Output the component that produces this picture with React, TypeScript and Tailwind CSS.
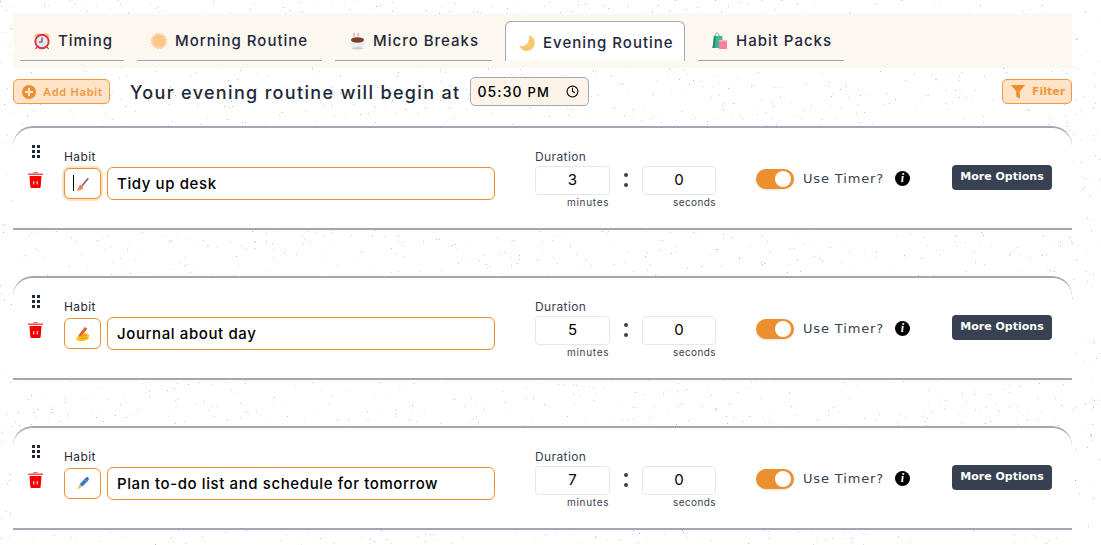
import { useMemo } from "react";
import { Clock } from "lucide-react";

const FONT = "font-['Inter',sans-serif]";
const VERDANA = "font-['DejaVu_Sans',sans-serif]";

// Seeded noise so the paper speckle is the same on every render
function Speckle() {
    const dots = useMemo(() => {
        let seed = 42;
        const rand = () => {
            seed = (seed * 16807) % 2147483647;
            return seed / 2147483647;
        };
        const out: { x: number; y: number; o: number }[] = [];
        for (let i = 0; i < 3600; i++) {
            out.push({
                x: Math.floor(rand() * 1101),
                y: Math.floor(rand() * 545),
                o: 0.15 + rand() * 0.5,
            });
        }
        return out;
    }, []);
    return (
        <svg className="absolute inset-0" width={1101} height={545}>
            {dots.map((d, i) => (
                <rect key={i} x={d.x} y={d.y} width={1} height={1} fill="#8a8a8a" opacity={d.o} />
            ))}
        </svg>
    );
}

function AlarmIcon() {
    return (
        <svg width="18" height="18" viewBox="0 0 18 18">
            <path d="M1 5.500 Q1.500 1 6.500 1.500 Z M17 5.500 Q16.500 1 11.500 1.500 Z" fill="#f7c24b" />
            <path d="M4 15l-1.500 2M14 15l1.500 2" stroke="#9a3a46" strokeWidth="1.200" />
            <circle cx="9" cy="9.500" r="6.700" fill="#e6e7ea" stroke="#dd2e44" strokeWidth="1.900" />
            <path d="M9 5.500v4.200l-3 .6" fill="none" stroke="#444" strokeWidth="1.100" />
        </svg>
    );
}

function SunIcon() {
    return (
        <svg width="18" height="18" viewBox="0 0 18 18">
            <circle cx="9" cy="9" r="6.800" fill="#fdc78a" />
            <circle cx="9" cy="9" r="7.400" fill="none" stroke="#fdc78a" strokeWidth="1.600" strokeDasharray="1.600 1.300" />
        </svg>
    );
}

function CoffeeIcon() {
    return (
        <svg width="20" height="18" viewBox="0 0 20 18">
            <path d="M6 5c-1-1.500 1-2 0-4M10 5c-1-1.500 1-2 0-4" fill="none" stroke="#d9a58c" strokeWidth="1.200" />
            <path d="M1.500 8h16c0 4-2 7-4.500 7.500h-7C3.500 15 1.500 12 1.500 8z" fill="#e8edf0" />
            <ellipse cx="9.500" cy="8" rx="8" ry="3.500" fill="#f4f6f7" />
            <ellipse cx="9.500" cy="8" rx="6.500" ry="2.700" fill="#7b3f2a" />
            <ellipse cx="9.500" cy="16.300" rx="6" ry="1.200" fill="#c6d2da" />
        </svg>
    );
}

function MoonIcon() {
    return (
        <svg width="18" height="18" viewBox="0 0 18 18">
            <path d="M11 1.200A8 8 0 1 1 1.200 11.500C5 14 12.500 10.500 11 1.200z" fill="#fcc66f" />
        </svg>
    );
}

function BagsIcon() {
    return (
        <svg width="18" height="18" viewBox="0 0 18 18">
            <path d="M4 4c0-4 4-4 4 0" fill="none" stroke="#7fa99b" strokeWidth="1" />
            <path d="M3 4h8l2 12H1.500z" fill="#3fb79a" />
            <path d="M3 4h2L4 16H1.500z" fill="#2a8e78" />
            <rect x="8" y="8" width="8" height="9" fill="#f47fa0" />
            <rect x="8" y="8" width="8" height="1.500" fill="#f9b2c6" />
        </svg>
    );
}

function BroomIcon() {
    return (
        <svg width="15" height="16" viewBox="0 0 18 18" className="mt-[2px]">
            <path d="M16 1L8 10.500" stroke="#8a5a5a" strokeWidth="1.800" />
            <path d="M6 8.500l4 3.500c-1 2.500-4.500 4-8 4 1.500-1.500 2-5 4-7.500z" fill="#f4845f" />
        </svg>
    );
}

function HandIcon() {
    return (
        <svg width="16" height="16" viewBox="0 0 18 18">
            <path d="M1 15l4-6 5-2 6 3-1 5-5 2H4z" fill="#fcc21b" />
            <path d="M11 1l3 2-7 8-3 1 1-3z" fill="#e8593c" />
            <path d="M6 12l7-2M6 14.500l7-1.500" stroke="#e8762c" strokeWidth="0.900" />
        </svg>
    );
}

function PenIcon() {
    return (
        <svg width="15" height="15" viewBox="0 0 18 18">
            <path d="M15.500 1.500c1.500 1 1.500 2.500 0 4.500l-7 7-3-3 7-7.500c1-1 2-1.500 3-1z" fill="#3b78c4" />
            <path d="M5.500 10l3 3-6 3.500z" fill="#f2c14e" />
            <path d="M12 5l1.500 1.500" stroke="#9cc3ef" strokeWidth="1" />
        </svg>
    );
}

function TrashIcon() {
    return (
        <svg width="15" height="16" viewBox="0 0 15 16">
            <path d="M5.500 1.500V.6h4v.9" fill="none" stroke="#ff5a5a" strokeWidth="1" />
            <rect x="0" y="1.500" width="15" height="1.600" rx=".5" fill="#ff4d4d" />
            <path d="M1.500 4h12l-.8 10.500a1.500 1.500 0 0 1-1.500 1.500H3.800a1.500 1.500 0 0 1-1.500-1.500z" fill="#f50000" />
            <path d="M5.800 9v3.500M9.200 9v3.500" stroke="#fff" strokeWidth="1" />
        </svg>
    );
}

function PlusDisc() {
    return (
        <svg width="14" height="14" viewBox="0 0 14 14">
            <circle cx="7" cy="7" r="7" fill="#ec8f2f" />
            <path d="M7 3v8M3 7h8" stroke="#fee3c6" strokeWidth="2" />
        </svg>
    );
}

function FunnelIcon() {
    return (
        <svg width="14" height="14" viewBox="0 0 14 14">
            <path d="M0 0h14L8.800 6.500V14l-3.600-2.500V6.500z" fill="#ec8f2f" />
        </svg>
    );
}

const tabs = [
    { label: "Timing", icon: <AlarmIcon />, width: "w-[104px]" },
    { label: "Morning Routine", icon: <SunIcon />, width: "w-[185px]" },
    { label: "Micro Breaks", icon: <CoffeeIcon />, width: "w-[157px]", gap: "gap-[5px]" },
    { label: "Evening Routine", icon: <MoonIcon />, width: "w-[180px]", active: true },
    { label: "Habit Packs", icon: <BagsIcon />, width: "w-[146px]" },
];

const habits = [
    { name: "Tidy up desk", minutes: 3, icon: <BroomIcon />, focused: true },
    { name: "Journal about day", minutes: 5, icon: <HandIcon /> },
    { name: "Plan to-do list and schedule for tomorrow", minutes: 7, icon: <PenIcon /> },
];

function DragDots() {
    return (
        <div className="grid grid-cols-2 gap-x-[2px] gap-y-[2px] w-[8px]">
            {[0, 1, 2, 3, 4, 5].map((i) => (
                <span key={i} className="w-[3px] h-[3px] bg-[#1f2937]" />
            ))}
        </div>
    );
}

function HabitCard({ name, minutes, icon, focused }: { name: string; minutes: number; icon: React.ReactNode; focused?: boolean }) {
    return (
        <div className="relative flex h-[104px] mb-[46px] bg-white border-t-2 border-b-2 border-[#a3a6b5] rounded-t-[20px]">
            {/* Handle and delete */}
            <div className="w-[51px] pr-[6px] pt-[17px] flex flex-col items-center">
                <DragDots />
                <div className="mt-[14px]">
                    <TrashIcon />
                </div>
            </div>

            {/* Habit name */}
            <div className="w-[471px] pt-[22px]">
                <div className="text-[12px] leading-[14px] tracking-[0.4px] text-[#1f2937]">Habit</div>
                <div className="flex gap-[6px] mt-[3px]">
                    <div
                        className={`w-[37px] h-[31px] mt-[1px] relative flex items-center justify-center rounded-[6px] border border-[#ec8f2f] bg-white ${
                            focused ? "ring-2 ring-[#fde3c4]" : ""
                        }`}
                    >
                        {focused && <span className="absolute left-[8px] top-[6px] w-px h-[16px] bg-black" />}
                        {icon}
                    </div>
                    <input
                        readOnly
                        value={name}
                        className={`w-[388px] h-[33px] px-[9px] rounded-[6px] border border-[#ec8f2f] bg-white text-[15px] font-medium tracking-[0.6px] text-black outline-none ${FONT}`}
                    />
                </div>
            </div>

            {/* Duration */}
            <div className="w-[221px] pt-[22px]">
                <div className="text-[12px] leading-[14px] tracking-[0.4px] text-[#374151]">Duration</div>
                <div className="flex items-start mt-[2px]">
                    <div>
                        <div className="w-[75px] h-[29px] rounded-[4px] border border-[#e5e7eb] flex items-center justify-center text-[15px] text-black">
                            {minutes}
                        </div>
                        <div className="text-[10px] leading-[12px] mt-[1px] pl-[32px] text-[#374151] tracking-[0.7px] whitespace-nowrap">minutes</div>
                    </div>
                    <div className="w-[32px] flex flex-col items-center gap-[6px] pt-[7px]">
                        <span className="w-[4px] h-[4px] rounded-full bg-[#374151]" />
                        <span className="w-[4px] h-[4px] rounded-full bg-[#374151]" />
                    </div>
                    <div>
                        <div className="w-[74px] h-[29px] rounded-[4px] border border-[#e5e7eb] flex items-center justify-center text-[15px] text-black">
                            0
                        </div>
                        <div className="text-[10px] leading-[12px] mt-[1px] pl-[31px] text-[#374151] tracking-[0.4px] whitespace-nowrap">seconds</div>
                    </div>
                </div>
            </div>

            {/* Timer toggle */}
            <div className="w-[196px] pt-[41px] flex items-start">
                <div className="w-[38px] h-[20px] rounded-full bg-[#ec8f2f] relative shadow-sm">
                    <span className="absolute right-[3px] top-[2px] w-[16px] h-[16px] rounded-full bg-white" />
                </div>
                <span className={`ml-[9px] text-[13px] leading-[20px] tracking-[0.85px] text-[#374151] whitespace-nowrap ${VERDANA}`}>Use Timer?</span>
                <span className="ml-[11px] mt-[2px] w-[15px] h-[15px] rounded-full bg-black text-white text-[12px] leading-[15px] font-bold italic text-center font-['Liberation_Serif',serif]">
                    i
                </span>
            </div>

            {/* More options */}
            <div className="pt-[37px]">
                <button className={`block w-[100px] h-[25px] rounded-[4px] bg-[#374151] text-white text-[11px] font-bold ${VERDANA}`}>
                    More Options
                </button>
            </div>
        </div>
    );
}

export default function App() {
    return (
        <div className={`relative w-[1101px] h-[545px] overflow-hidden bg-white text-[#1e293b] ${FONT}`}>
            <Speckle />
            <div className="relative pt-[14px] pl-[13px] w-[1072px]">
                {/* Tabs */}
                <div className="h-[54px] bg-[#fcf7ef] flex gap-[13px] pl-[7px] pt-[7px] rounded-t-[3px]">
                    {tabs.map((tab) =>
                        tab.active ? (
                            <div
                                key={tab.label}
                                className={`${tab.width} h-[40px] bg-white rounded-t-[6px] border-t border-x border-[#a3a6b5] flex items-center pl-[12px] pt-[3px] gap-[7px] text-[15px] font-medium tracking-[1px]`}
                            >
                                {tab.icon}
                                {tab.label}
                            </div>
                        ) : (
                            <div
                                key={tab.label}
                                className={`${tab.width} h-[40px] border-b border-[#9ca3af] flex items-center pl-[13px] pt-[1px] ${tab.gap ?? "gap-[7px]"} text-[15px] font-medium tracking-[1px]`}
                            >
                                {tab.icon}
                                {tab.label}
                            </div>
                        ),
                    )}
                </div>

                {/* Toolbar */}
                <div className="flex items-center h-[29px] mt-[9px] mb-[20px]">
                    <button
                        className={`w-[97px] h-[25px] rounded-[5px] border border-[#ec9a45] bg-[#fee3c6] flex items-center pl-[8px] pt-[1px] gap-[7px] text-[11px] font-semibold text-[#f0993f] tracking-[0.8px] ${FONT}`}
                    >
                        <PlusDisc />
                        Add Habit
                    </button>
                    <span className="ml-[20px] pt-[1px] text-[18px] font-medium tracking-[1.33px] whitespace-nowrap">Your evening routine will begin at</span>
                    <div className="ml-[10px] w-[119px] h-[29px] rounded-[5px] border border-[#a3a6b5] bg-[#fdf3e8] flex items-center pl-[6px] pr-[9px] justify-between text-[14px] font-medium text-black tracking-[1.1px]">
                        <span>
                            05:30 <span className="text-[13px]">PM</span>
                        </span>
                        <Clock className="w-[13px] h-[13px]" strokeWidth={2} />
                    </div>
                    <button
                        className={`ml-auto w-[70px] h-[25px] rounded-[5px] border border-[#ec9a45] bg-[#fee3c6] flex items-center pl-[8px] gap-[7px] text-[11px] font-bold text-[#f0993f] ${VERDANA}`}
                    >
                        <FunnelIcon />
                        <span className="pt-[1px]">Filter</span>
                    </button>
                </div>

                {habits.map((h) => (
                    <HabitCard key={h.name} {...h} />
                ))}
            </div>
        </div>
    );
}
